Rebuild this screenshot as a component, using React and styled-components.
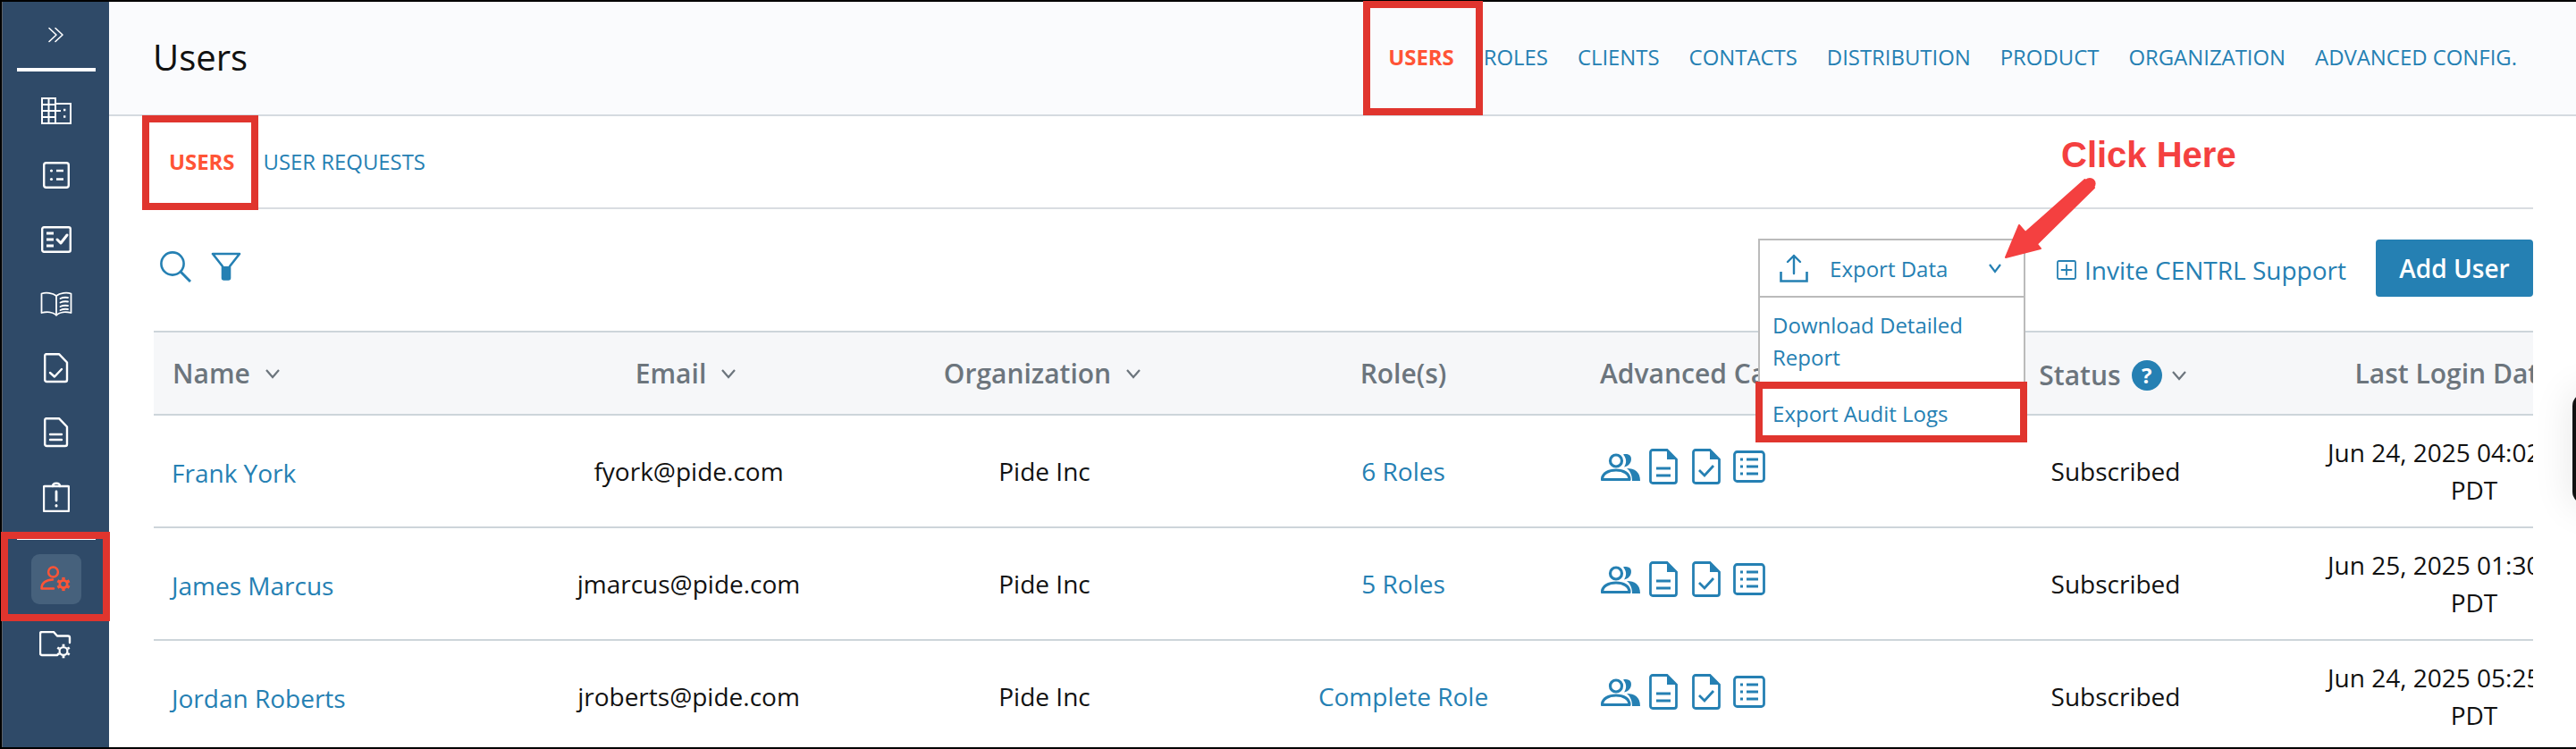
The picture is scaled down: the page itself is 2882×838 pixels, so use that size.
import React from "react";
import styled, { createGlobalStyle } from "styled-components";

const BLUE = "#2580b3";
const NAVY = "#2f4a68";
const ORANGE = "#ff5436";
const BOX = "#e0352e";
const LINE = "#cdd5da";

const Global = createGlobalStyle`
  html, body { margin: 0; padding: 0; background: #000; }
  * { box-sizing: border-box; }
  body { font-family: "Open Sans", "Liberation Sans", sans-serif; }
`;

const Page = styled.div`
  position: relative;
  width: 2882px;
  height: 838px;
  overflow: hidden;
  display: flex;
  background: #000;
  padding: 2px 0 2px 2px;
`;

const Sidebar = styled.aside`
  width: 120px;
  flex: none;
  display: flex;
  flex-direction: column;
  align-items: center;
  background: ${NAVY};
  border-left: 1px solid #5c626a;
`;

const Expand = styled.div`
  height: 74px;
  display: flex;
  align-items: center;
  justify-content: center;
  color: #fff;
`;

const SideRule = styled.div`
  width: 88px;
  height: 4px;
  margin-top: ${(p) => p.$mt || 0}px;
  background: #fff;
  flex: none;
`;

const SideList = styled.div`
  padding-top: 8px;
  display: flex;
  flex-direction: column;
  align-items: center;
`;

const SideItem = styled.div`
  width: 56px;
  height: 72px;
  display: flex;
  align-items: center;
  justify-content: center;
`;

const SideActive = styled.div`
  width: 56px;
  height: 56px;
  margin-top: 16px;
  border-radius: 9px;
  background: #46617c;
  display: flex;
  align-items: center;
  justify-content: center;
`;

const SideLast = styled(SideItem)`
  margin-top: 10px;
`;

const Main = styled.main`
  flex: 1;
  min-width: 0;
  background: #fff;
  display: flex;
  flex-direction: column;
`;

const Header = styled.header`
  height: 128px;
  flex: none;
  background: #fafbfd;
  border-bottom: 2px solid #d5dae0;
  display: flex;
  align-items: center;
  justify-content: space-between;
  padding: 0 66px 0 49px;
`;

const Title = styled.h1`
  margin: 0 0 4px;
  font-size: 40px;
  font-weight: 500;
  color: #111;
`;

const TopNav = styled.nav`
  display: flex;
  align-items: center;
  gap: 33px;
  margin-bottom: 2px;
`;

const Tab = styled.a`
  font-size: 23.9px;
  line-height: 32px;
  font-weight: ${(p) => (p.$active ? 700 : 400)};
  color: ${(p) => (p.$active ? ORANGE : BLUE)};
  white-space: nowrap;
`;

const Content = styled.div`
  flex: 1;
  min-height: 0;
  padding: 0 48px 0 50px;
  display: flex;
  flex-direction: column;
`;

const SubNav = styled.nav`
  height: 104px;
  flex: none;
  display: flex;
  align-items: center;
  gap: 32px;
  padding: 0 0 0 17px;
  border-bottom: 2px solid #d9dde1;
`;

const Toolbar = styled.div`
  height: 136px;
  flex: none;
  display: flex;
  align-items: flex-start;
  justify-content: space-between;
`;

const ToolIcons = styled.div`
  display: flex;
  align-items: center;
  gap: 22px;
  padding: 46px 0 0 6px;
`;

const ToolActions = styled.div`
  display: flex;
  align-items: center;
  padding-top: 33px;
`;

const ExportWrap = styled.div`
  position: relative;
  width: 299px;
  margin-right: 35px;
`;

const ExportButton = styled.div`
  height: 66px;
  border: 2px solid #bbb;
  background: #fff;
  display: flex;
  align-items: center;
  padding: 0 24px 0 22px;
  color: ${BLUE};
  font-size: 24px;
`;

const ExportLabel = styled.span`
  margin: 2px 0 0 24px;
  flex: 1;
  line-height: 32px;
`;

const ExportMenu = styled.div`
  position: absolute;
  z-index: 2;
  top: 66px;
  left: 0;
  width: 100%;
  height: 162px;
  background: #fff;
  border: 2px solid #bbb;
  border-top: 0;
  padding: 13px 16px 0 14px;
`;

const MenuItem = styled.div`
  color: ${BLUE};
  font-size: 24px;
  line-height: 36px;
  margin-bottom: ${(p) => p.$gap || 0}px;
`;

const Invite = styled.a`
  display: flex;
  align-items: center;
  gap: 9px;
  color: ${BLUE};
  font-size: 28px;
  line-height: 38px;
  margin: 4px 33px 0 0;
  white-space: nowrap;
`;

const AddButton = styled.button`
  width: 176px;
  height: 64px;
  border: 0;
  border-radius: 4px;
  background: ${BLUE};
  color: #fff;
  font: 600 28px "Open Sans", sans-serif;
`;

const Table = styled.div`
  width: 2662px;
  overflow: hidden;
`;

const Row = styled.div`
  display: grid;
  grid-template-columns: 403px 391px 405px 398px 431px 334px 468px;
  width: 2830px;
  align-items: center;
  height: ${(p) => (p.$head ? 95 : 126)}px;
  border-top: ${(p) => (p.$head ? `2px solid ${LINE}` : 0)};
  border-bottom: 2px solid ${LINE};
  background: ${(p) => (p.$head ? "#f6f7f9" : "#fff")};
  flex: none;
`;

const HeadCell = styled.div`
  display: flex;
  align-items: center;
  justify-content: ${(p) => (p.$left ? "flex-start" : "center")};
  gap: ${(p) => p.$gap ?? 16}px;
  padding-left: ${(p) => p.$pad || 0}px;
  padding-right: ${(p) => p.$pr || 0}px;
  color: #6c757d;
  font-size: 30px;
  line-height: 40px;
  font-weight: 600;
  white-space: nowrap;
  position: relative;
  top: ${(p) => p.$top || 0}px;
`;

const Cell = styled.div`
  text-align: ${(p) => (p.$left ? "left" : "center")};
  padding-left: ${(p) => p.$pad || 0}px;
  color: ${(p) => (p.$link ? BLUE : "#111")};
  font-size: 28px;
  line-height: 42px;
  white-space: nowrap;
  position: relative;
  top: ${(p) => p.$top || 0}px;
`;

const CellIcons = styled.div`
  display: flex;
  align-items: center;
  padding-left: 22px;
  margin-top: -10px;
`;

const Help = styled.span`
  width: 34px;
  height: 34px;
  border-radius: 50%;
  background: ${BLUE};
  color: #fff;
  font-size: 24px;
  font-weight: 700;
  line-height: 34px;
  text-align: center;
  margin: 0 -4px 0 -2px;
  flex: none;
`;

const Callout = styled.div`
  position: absolute;
  z-index: 3;
  left: ${(p) => p.$x}px;
  top: ${(p) => p.$y}px;
  width: ${(p) => p.$w}px;
  height: ${(p) => p.$h}px;
  border: 8px solid ${BOX};
  pointer-events: none;
`;

const ClickHere = styled.div`
  position: absolute;
  z-index: 4;
  left: 2306px;
  top: 150px;
  color: #f44040;
  font: 700 40px/46px "Liberation Sans", Arial, sans-serif;
  white-space: nowrap;
`;

const ArrowSvg = styled.svg`
  position: absolute;
  z-index: 4;
  left: 2230px;
  top: 190px;
`;

const EdgeBlob = styled.div`
  position: absolute;
  z-index: 1;
  left: 2878px;
  top: 440px;
  width: 40px;
  height: 124px;
  border-radius: 14px;
  background: #111;
  box-shadow: 0 0 40px 6px rgba(0, 0, 0, 0.08);
`;

const S = ({ w, h, c = "#fff", sw = 2.4, children }) => (
  <svg width={w} height={h} viewBox={`0 0 ${w} ${h}`} fill="none" stroke={c} strokeWidth={sw} strokeLinecap="round" strokeLinejoin="round">
    {children}
  </svg>
);

const Gear = ({ x, y, c, r = 5, sw = 2.6 }) => (
  <g stroke={c}>
    <circle cx={x} cy={y} r={r} strokeWidth={sw} />
    {[0, 60, 120, 180, 240, 300].map((a) => {
      const t = ((a + 30) * Math.PI) / 180;
      return (
        <line key={a} x1={x + Math.cos(t) * (r + 1)} y1={y + Math.sin(t) * (r + 1)} x2={x + Math.cos(t) * (r + 3.4)} y2={y + Math.sin(t) * (r + 3.4)} strokeWidth={sw + 0.6} strokeLinecap="butt" />
      );
    })}
  </g>
);

const IconChevronsRight = () => (
  <S w={20} h={20} sw={1.6}>
    <path d="M2 2.5 L10 10 L2 17.5" />
    <path d="M9 2.5 L17 10 L9 17.5" />
  </S>
);

const IconBuilding = () => (
  <S w={34} h={30} sw={2}>
    <g strokeLinecap="butt" strokeLinejoin="miter">
      <path d="M1 29 V1 H16 V7 H33 V29 Z" />
      <path d="M1 8 H16 M1 15 H22 M1 22 H16 M8.5 1 V29 M16 7 V29" />
    </g>
    <path d="M25 14 h2.4 M25 21.5 h2.4" strokeWidth="2.6" strokeLinecap="butt" />
  </S>
);

const IconList = () => (
  <S w={30} h={30}>
    <rect x="1.2" y="1.2" width="27.6" height="27.6" rx="2.5" />
    <circle cx="9.5" cy="10" r="1.6" fill="#fff" stroke="none" />
    <circle cx="9.5" cy="19.5" r="1.6" fill="#fff" stroke="none" />
    <path d="M15 10 H23 M15 19.5 H23" strokeLinecap="butt" />
  </S>
);

const IconChecklist = () => (
  <S w={34} h={30}>
    <rect x="1.2" y="1.2" width="31.6" height="27.6" rx="2" />
    <path d="M6 8 H14 M6 15 H14 M6 22 H14" strokeWidth="2.8" strokeLinecap="butt" />
    <path d="M18 15 L22 19 L29 10" strokeWidth="3" />
  </S>
);

const IconBook = () => (
  <S w={36} h={28} sw={1.8}>
    <path d="M18 5 C14 1.5 6 1 1.5 2.5 V24 C7 22.5 14 23 18 26.5 C22 23 29 22.5 34.5 24 V2.5 C30 1 22 1.5 18 5 Z" />
    <path d="M18 5 V26.5" />
    <path d="M22.5 8 C25 6.8 28 6.5 31 7 M22.5 12.5 C25 11.3 28 11 31 11.5 M22.5 17 C25 15.8 28 15.5 31 16 M22.5 21 C25 19.8 28 19.5 31 20" />
  </S>
);

const docPath = "M2.5 1.2 H17 L26 10.5 V30 a2 2 0 0 1 -2 2 H3.2 a2 2 0 0 1 -2 -2 V3 a2 2 0 0 1 1.3 -1.8 Z";

const IconDocCheck = () => (
  <S w={28} h={34}>
    <path d={docPath} />
    <path d="M7 22 L12 26.5 L20 18" />
  </S>
);

const IconDoc = () => (
  <S w={28} h={34}>
    <path d={docPath} />
    <path d="M7 19 H20 M7 25 H20" />
  </S>
);

const IconClipboard = () => (
  <S w={30} h={34}>
    <path d="M2 5 H28 a1 1 0 0 1 1 1 V32 a1 1 0 0 1 -1 1 H2 a1 1 0 0 1 -1 -1 V6 a1 1 0 0 1 1 -1 Z" />
    <path d="M11 5 C11 0.5 19 0.5 19 5" />
    <path d="M15 11 V21" strokeWidth="2.8" />
    <path d="M15 26.5 V27" strokeWidth="3" />
  </S>
);

const IconUserGear = () => (
  <S w={36} h={30} c={ORANGE} sw={2.5}>
    <circle cx="14.5" cy="7" r="5.4" />
    <path d="M14 15.5 C5 16 1.5 19.5 1.5 25.5 H15" />
    <Gear x={26} y={20.5} c={ORANGE} r={4.2} sw={2.8} />
  </S>
);

const IconFolderGear = () => (
  <S w={38} h={32}>
    <path d="M20 27 H3 a2 2 0 0 1 -2 -2 V3 a2 2 0 0 1 2 -2 H16 L20 5.5 H32 a2 2 0 0 1 2 2 V13" />
    <Gear x={27} y={22.5} c="#fff" r={4.4} sw={2.2} />
  </S>
);

const IconSearch = () => (
  <S w={36} h={36} c={BLUE} sw={2.6}>
    <circle cx="15" cy="15" r="12.6" />
    <path d="M24.5 24.5 L35 35" strokeLinecap="butt" strokeWidth="3" />
  </S>
);

const IconFilter = () => (
  <svg width="34" height="32" viewBox="0 0 34 32">
    <path d="M2 2 H32 L21 16 V29 a1.5 1.5 0 0 1 -1.5 1.5 H14.5 A1.5 1.5 0 0 1 13 29 V16 Z" fill="none" stroke={BLUE} strokeWidth="2.6" strokeLinejoin="round" />
    <path d="M13 16 H21 V29 a1.5 1.5 0 0 1 -1.5 1.5 H14.5 A1.5 1.5 0 0 1 13 29 Z" fill={BLUE} />
  </svg>
);

const IconUpload = () => (
  <S w={32} h={32} c={BLUE} sw={2.4}>
    <path d="M16 22 V2 M9 9 L16 2 L23 9" />
    <path d="M1.5 20 V30.5 H30.5 V20" strokeLinejoin="miter" strokeLinecap="butt" strokeWidth="2.6" />
  </S>
);

const Chevron = ({ c = "#6c757d", w = 18 }) => (
  <S w={w} h={12} c={c} sw={2.2}>
    <path d={`M2 2 L${w / 2} 10 L${w - 2} 2`} strokeLinecap="butt" strokeLinejoin="miter" />
  </S>
);

const IconPlusBox = () => (
  <S w={22} h={22} c={BLUE} sw={1.8}>
    <rect x="1" y="1" width="20" height="20" rx="1.5" />
    <path d="M11 5.5 V16.5 M5.5 11 H16.5" />
  </S>
);

const RowPeople = () => (
  <svg width="44" height="31" viewBox="0 0 44 31" style={{ flex: "none" }}>
    <circle cx="17" cy="8.5" r="6.5" fill="none" stroke={BLUE} strokeWidth="3.2" />
    <path d="M25 1.5 C28 0.5 32 1 33.5 4 C35 8 33 14 26 15.5 C29 11 29 6 25 1.5 Z" fill={BLUE} />
    <path d="M1.5 29.5 C1.5 22.5 9 19 17 19 C25 19 32 22.5 32 29.5 Z" fill="none" stroke={BLUE} strokeWidth="3.2" strokeLinejoin="round" />
    <path d="M29 17 C38 17 44 21 44 31 H35 C35 25 33 20 29 17 Z" fill={BLUE} />
  </svg>
);

const rowDoc = "M4 1.5 H20 L30.5 12 V36 a2.5 2.5 0 0 1 -2.5 2.5 H4 a2.5 2.5 0 0 1 -2.5 -2.5 V4 a2.5 2.5 0 0 1 2.5 -2.5 Z";

const RowDoc = () => (
  <svg width="32" height="40" viewBox="0 0 32 40" style={{ flex: "none", marginLeft: 10 }}>
    <path d={rowDoc} fill="none" stroke={BLUE} strokeWidth="2.8" />
    <path d="M20 2 L30 12 H20 Z" fill={BLUE} />
    <path d="M8 22 H24 M8 30 H24" stroke={BLUE} strokeWidth="3" />
  </svg>
);

const RowDocCheck = () => (
  <svg width="32" height="40" viewBox="0 0 32 40" style={{ flex: "none", marginLeft: 16 }}>
    <path d={rowDoc} fill="none" stroke={BLUE} strokeWidth="2.8" />
    <path d="M20 2 L30 12 H20 Z" fill={BLUE} />
    <path d="M8 24 L14 30 L24 19" fill="none" stroke={BLUE} strokeWidth="2.8" />
  </svg>
);

const RowList = () => (
  <svg width="36" height="36" viewBox="0 0 36 36" style={{ flex: "none", marginLeft: 14 }}>
    <rect x="1.5" y="1.5" width="33" height="33" rx="3" fill="none" stroke={BLUE} strokeWidth="2.8" />
    <path d="M15 10 H28 M15 18 H28 M15 26 H28" stroke={BLUE} strokeWidth="3" />
    <path d="M8 10 H11 M8 18 H11 M8 26 H11" stroke={BLUE} strokeWidth="3" />
  </svg>
);

const users = [
  { name: "Frank York", email: "fyork@pide.com", role: "6 Roles", date: "Jun 24, 2025 04:02:18 AM" },
  { name: "James Marcus", email: "jmarcus@pide.com", role: "5 Roles", date: "Jun 25, 2025 01:30:42 AM" },
  { name: "Jordan Roberts", email: "jroberts@pide.com", role: "Complete Role", date: "Jun 24, 2025 05:25:09 AM" },
];

const topTabs = ["ROLES", "CLIENTS", "CONTACTS", "DISTRIBUTION", "PRODUCT", "ORGANIZATION", "ADVANCED CONFIG."];

export default function App() {
  return (
    <>
      <Global />
      <Page>
        <Sidebar>
          <Expand><IconChevronsRight /></Expand>
          <SideRule />
          <SideList>
            <SideItem><IconBuilding /></SideItem>
            <SideItem><IconList /></SideItem>
            <SideItem><IconChecklist /></SideItem>
            <SideItem><IconBook /></SideItem>
            <SideItem><IconDocCheck /></SideItem>
            <SideItem><IconDoc /></SideItem>
            <SideItem><IconClipboard /></SideItem>
          </SideList>
          <SideRule $mt={8} />
          <SideActive><IconUserGear /></SideActive>
          <SideLast><IconFolderGear /></SideLast>
        </Sidebar>
        <Main>
          <Header>
            <Title>Users</Title>
            <TopNav>
              <Tab $active>USERS</Tab>
              {topTabs.map((t) => <Tab key={t}>{t}</Tab>)}
            </TopNav>
          </Header>
          <Content>
            <SubNav>
              <Tab $active>USERS</Tab>
              <Tab>USER REQUESTS</Tab>
            </SubNav>
            <Toolbar>
              <ToolIcons>
                <IconSearch />
                <IconFilter />
              </ToolIcons>
              <ToolActions>
                <ExportWrap>
                  <ExportButton>
                    <IconUpload />
                    <ExportLabel>Export Data</ExportLabel>
                    <Chevron c={BLUE} w={16} />
                  </ExportButton>
                  <ExportMenu>
                    <MenuItem $gap={27}>Download Detailed Report</MenuItem>
                    <MenuItem>Export Audit Logs</MenuItem>
                  </ExportMenu>
                </ExportWrap>
                <Invite><IconPlusBox />Invite CENTRL Support</Invite>
                <AddButton>Add User</AddButton>
              </ToolActions>
            </Toolbar>
            <Table>
              <Row $head>
                <HeadCell $left $pad={21}>Name<Chevron /></HeadCell>
                <HeadCell $pr={6}>Email<Chevron /></HeadCell>
                <HeadCell $pr={4}>Organization<Chevron /></HeadCell>
                <HeadCell>Role(s)</HeadCell>
                <HeadCell $left $pad={21}>Advanced Capabilities</HeadCell>
                <HeadCell $gap={14} $top={2} $pr={6}>Status<Help>?</Help><Chevron /></HeadCell>
                <HeadCell $gap={26}>Last Login Date<Chevron /></HeadCell>
              </Row>
              {users.map((u) => (
                <Row key={u.email}>
                  <Cell $left $link $pad={20} $top={2}>{u.name}</Cell>
                  <Cell>{u.email}</Cell>
                  <Cell>Pide Inc</Cell>
                  <Cell $link>{u.role}</Cell>
                  <CellIcons><RowPeople /><RowDoc /><RowDocCheck /><RowList /></CellIcons>
                  <Cell>Subscribed</Cell>
                  <Cell>{u.date}<br />PDT</Cell>
                </Row>
              ))}
            </Table>
          </Content>
        </Main>
        <EdgeBlob />
        <Callout $x={1525} $y={1} $w={134} $h={128} />
        <Callout $x={159} $y={129} $w={130} $h={106} />
        <Callout $x={1} $y={595} $w={122} $h={100} />
        <Callout $x={1964} $y={427} $w={304} $h={68} />
        <ClickHere>Click Here</ClickHere>
        <ArrowSvg width="120" height="105" viewBox="0 0 120 105">
          <circle cx="108" cy="15.5" r="6.6" fill="#f44040" />
          <path d="M102.5 11 L113 20 L49 83 L53 88 L14 98 L29 62 L36 70 Z" fill="#f44040" stroke="#f44040" strokeWidth="2" strokeLinejoin="round" />
        </ArrowSvg>
      </Page>
    </>
  );
}
